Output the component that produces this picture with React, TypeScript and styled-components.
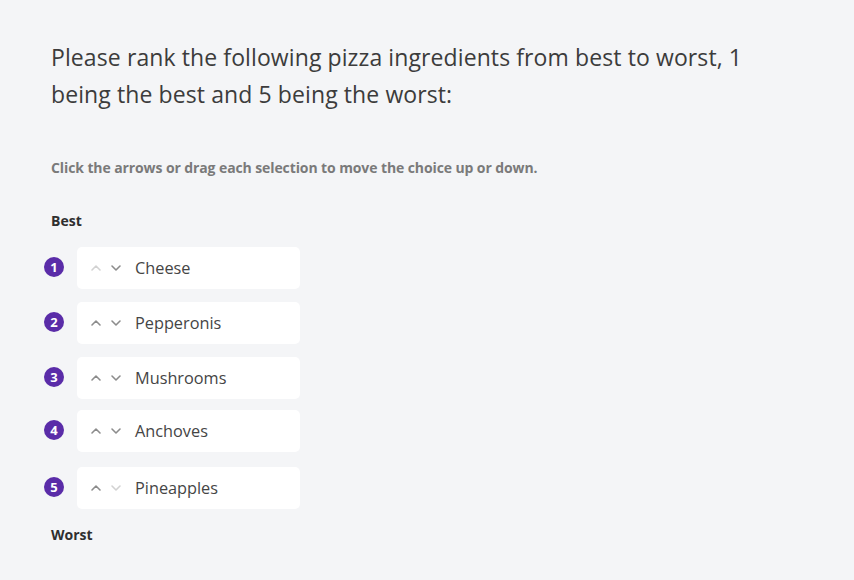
import React from "react";
import styled, { createGlobalStyle } from "styled-components";

const Global = createGlobalStyle`
  html, body { margin: 0; padding: 0; background: #f4f5f7; }
  body { font-family: "Open Sans", Lato, sans-serif; }
`;

const Page = styled.div`
  width: 854px;
  height: 580px;
  box-sizing: border-box;
  padding: 39px 0 0 51px;
  background: #f4f5f7;
`;

const Question = styled.h1`
  margin: 0;
  width: 700px;
  font-size: 23px;
  line-height: 37px;
  letter-spacing: 0.1px;
  font-weight: 400;
  color: #3c3c3c;
`;

const Hint = styled.p`
  margin: 45px 0 0;
  font-size: 14px;
  line-height: 20px;
  letter-spacing: -0.1px;
  font-weight: 700;
  color: #7a7a7a;
`;

const EndLabel = styled.div<{ $top: number }>`
  margin-top: ${(p) => p.$top}px;
  font-size: 14px;
  line-height: 20px;
  font-weight: 700;
  color: #2f2f2f;
`;

const List = styled.div`
  display: flex;
  flex-direction: column;
  margin-top: 16px;
`;

const Row = styled.div<{ $gap: number }>`
  display: flex;
  align-items: center;
  margin-top: ${(p) => p.$gap}px;
`;

const Badge = styled.span`
  width: 20px;
  height: 20px;
  border-radius: 50%;
  background: #5a2ca8;
  color: #fff;
  font-size: 13px;
  font-weight: 700;
  display: flex;
  align-items: center;
  justify-content: center;
  margin-left: -7px;
  margin-right: 13px;
  margin-top: -2px;
`;

const Card = styled.div`
  width: 223px;
  height: 42px;
  box-sizing: border-box;
  background: #fff;
  border-radius: 5px;
  display: flex;
  align-items: center;
  padding-left: 13px;
`;

const Arrow = styled.span<{ $disabled: boolean }>`
  display: flex;
  width: 12px;
  margin-right: 8px;
  color: ${(p) => (p.$disabled ? "#d2d2d2" : "#8c8c8c")};
`;

const Label = styled.span`
  margin-left: 5px;
  font-size: 16.3px;
  color: #454545;
`;

const Chevron = ({ up }: { up: boolean }) => (
  <svg width="12" height="8" viewBox="0 0 12 8" fill="none">
    <path
      d={up ? "M2 6 L6 2 L10 6" : "M2 2 L6 6 L10 2"}
      stroke="currentColor"
      strokeWidth="1.6"
      strokeLinecap="round"
      strokeLinejoin="round"
    />
  </svg>
);

const items = ["Cheese", "Pepperonis", "Mushrooms", "Anchoves", "Pineapples"];
const gaps = [0, 13, 13, 11, 15];

export default function App() {
  return (
    <Page>
      <Global />
      <Question>
        Please rank the following pizza ingredients from best to worst, 1 being the best and 5
        being the worst:
      </Question>
      <Hint>Click the arrows or drag each selection to move the choice up or down.</Hint>
      <EndLabel $top={33}>Best</EndLabel>
      <List>
        {items.map((item, i) => (
          <Row key={item} $gap={gaps[i]}>
            <Badge>{i + 1}</Badge>
            <Card>
              <Arrow $disabled={i === 0}>
                <Chevron up />
              </Arrow>
              <Arrow $disabled={i === items.length - 1}>
                <Chevron up={false} />
              </Arrow>
              <Label>{item}</Label>
            </Card>
          </Row>
        ))}
      </List>
      <EndLabel $top={16}>Worst</EndLabel>
    </Page>
  );
}
